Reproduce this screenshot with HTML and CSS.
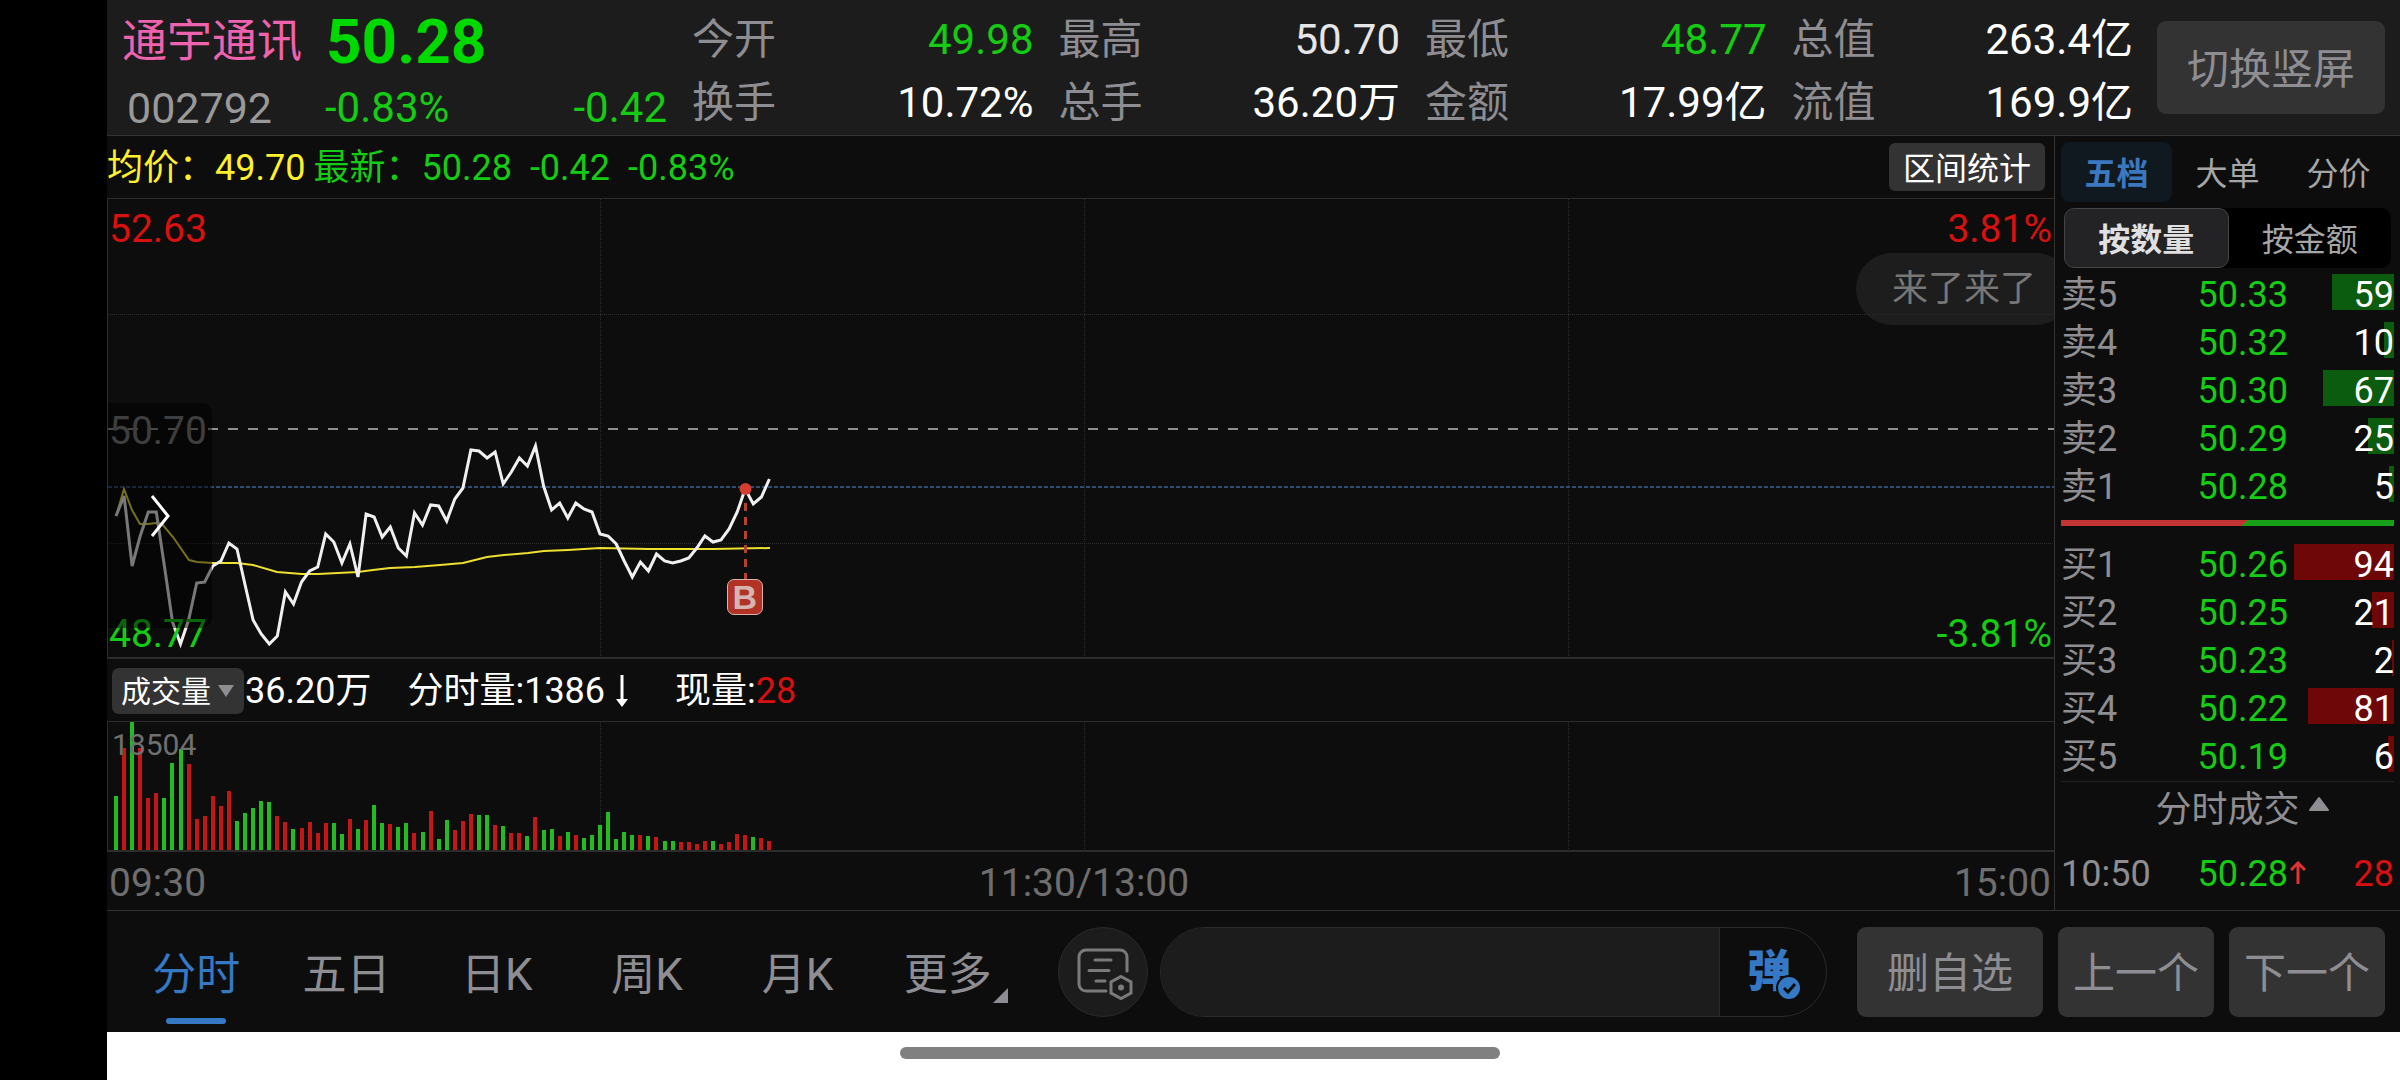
FILE: index.html
```html
<!DOCTYPE html>
<html lang="zh-CN">
<head>
    <meta charset="UTF-8">
    <meta name="viewport" content="width=device-width, initial-scale=1.0">
    <title>通宇通讯 002792</title>
    <link rel="stylesheet" href="styles.css">
</head>
<body>
    <div id="app">
        <header id="top">
            <div class="quote">
                <div class="quote_row">
                    <h1 class="stock_name">通宇通讯</h1>
                    <strong class="stock_price">50.28</strong>
                </div>
                <div class="quote_row">
                    <span class="stock_code">002792</span>
                    <span class="green">-0.83%</span>
                    <span class="change green">-0.42</span>
                </div>
            </div>
            <dl class="stats">
                <div><dt>今开</dt><dd class="green">49.98</dd></div>
                <div><dt>最高</dt><dd class="soft">50.70</dd></div>
                <div><dt>最低</dt><dd class="green">48.77</dd></div>
                <div><dt>总值</dt><dd>263.4亿</dd></div>
                <div><dt>换手</dt><dd>10.72%</dd></div>
                <div><dt>总手</dt><dd>36.20万</dd></div>
                <div><dt>金额</dt><dd>17.99亿</dd></div>
                <div><dt>流值</dt><dd>169.9亿</dd></div>
            </dl>
            <button class="btn rotate_btn">切换竖屏</button>
        </header>

        <div id="content">
            <main id="chart">
                <div class="info_bar">
                    <span class="yellow">均价：49.70</span>
                    <span class="latest green"><span>最新：50.28</span><span>-0.42</span><span>-0.83%</span></span>
                    <button class="range_btn">区间统计</button>
                </div>

                <!-- 分时走势 -->
                <div class="plot price_plot">
                    <span class="tag red left top">52.63</span>
                    <span class="tag red right top">3.81%</span>
                    <span class="tag gray left middle">50.70</span>
                    <svg viewBox="0 0 1946 458" preserveAspectRatio="none">
                        <g class="grid">
                            <path d="M0 115.500H1946M0 344.500H1946M492.500 0V458M976.500 0V458M1460.500 0V458"/>
                        </g>
                        <path class="base_line" d="M0 230H1946"/>
                        <path class="now_line" d="M0 288H1946"/>
                        <polyline class="avg_line" points="8,317 16,290 24,311 32,325 40,325 48,324 54,325 65,338 81,361 89,363 105,364 129,364 145,366 169,373 194,375 210,375 250,373 265,371 282,369 307,368 332,366 355,364 379,358 396,356 420,354 436,352 460,351 492,349 541,350 605,350 662,349"/>
                        <polyline class="price_line" id="price_line"/>
                        <path class="trade_line" d="M637.500 304V381"/>
                        <circle class="trade_dot" cx="637.500" cy="290" r="6"/>
                    </svg>
                    <span class="tag green left bottom">48.77</span>
                    <span class="tag green right bottom">-3.81%</span>
                    <span class="trade_mark">B</span>
                    <button class="expand" aria-label="展开">
                        <svg width="20" height="44" viewBox="0 0 20 44"><path d="M2 2L18 22L2 42"/></svg>
                    </button>
                    <div class="bullet">来了来了</div>
                </div>

                <div class="volume_bar">
                    <label class="indicator">
                        <select aria-label="指标">
                            <option>成交量</option>
                        </select>
                    </label>
                    <span>36.20万</span>
                    <span class="minute">分时量:1386<svg width="34" height="36" viewBox="0 0 34 36"><path d="M17 2V27" stroke="#fff" stroke-width="3"/><path d="M11 26H23L17 34Z" fill="#fff"/></svg></span>
                    <span>现量:<b class="red">28</b></span>
                </div>

                <!-- 成交量 -->
                <div class="plot volume_plot">
                    <svg viewBox="0 0 1946 128" preserveAspectRatio="none">
                        <g class="grid">
                            <path d="M492.500 0V128M976.500 0V128M1460.500 0V128"/>
                        </g>
                        <path class="vol_up" id="vol_up"/>
                        <path class="vol_down" id="vol_down"/>
                    </svg>
                    <span class="vol_max">18504</span>
                </div>

                <div class="time_axis">
                    <span>09:30</span>
                    <span>11:30/13:00</span>
                    <span>15:00</span>
                </div>
            </main>

            <aside id="book">
                <nav class="book_tabs">
                    <button class="active">五档</button>
                    <button>大单</button>
                    <button>分价</button>
                </nav>
                <div class="segment">
                    <button class="active">按数量</button>
                    <button>按金额</button>
                </div>
                <table class="sell">
                    <tr><th>卖5</th><td>50.33</td><td><i style="width:62%"></i><span>59</span></td></tr>
                    <tr><th>卖4</th><td>50.32</td><td><i style="width:10%"></i><span>10</span></td></tr>
                    <tr><th>卖3</th><td>50.30</td><td><i style="width:71%"></i><span>67</span></td></tr>
                    <tr><th>卖2</th><td>50.29</td><td><i style="width:26%"></i><span>25</span></td></tr>
                    <tr><th>卖1</th><td>50.28</td><td><i style="width:5%"></i><span>5</span></td></tr>
                </table>
                <div class="ratio"></div>
                <table class="buy">
                    <tr><th>买1</th><td>50.26</td><td><i style="width:100%"></i><span>94</span></td></tr>
                    <tr><th>买2</th><td>50.25</td><td><i style="width:22%"></i><span>21</span></td></tr>
                    <tr><th>买3</th><td>50.23</td><td><i style="width:2%"></i><span>2</span></td></tr>
                    <tr><th>买4</th><td>50.22</td><td><i style="width:86%"></i><span>81</span></td></tr>
                    <tr><th>买5</th><td>50.19</td><td><i style="width:6%"></i><span>6</span></td></tr>
                </table>
                <button class="deals_btn">分时成交
                    <svg width="22" height="16" viewBox="0 0 22 16"><path d="M11 2L20 14H2Z" fill="#8e8d92" stroke="#8e8d92" stroke-width="2" stroke-linejoin="round"/></svg>
                </button>
                <table class="deals">
                    <tr>
                        <th>10:50</th>
                        <td>50.28</td>
                        <td class="red"><svg class="up_arrow" width="16" height="24" viewBox="0 0 16 24"><path d="M8 23V3M1 9L8 2L15 9"/></svg>28</td>
                    </tr>
                </table>
            </aside>
        </div>

        <footer id="bottom">
            <nav class="period">
                <button class="active">分时</button>
                <button>五日</button>
                <button>日K</button>
                <button>周K</button>
                <button>月K</button>
                <button class="more">更多</button>
            </nav>
            <button class="circle_btn" aria-label="弹幕设置">
                <svg width="60" height="60" viewBox="0 0 60 60">
                    <path d="M54 29V15a7 7 0 0 0-7-7H13a7 7 0 0 0-7 7v27a7 7 0 0 0 7 7H33M22 18H38M16 28.500H36M23 39H32"/>
                    <path d="M48 34.500L58 40V51L48 56.500L38 51V40Z"/>
                    <circle cx="48" cy="45.500" r="3"/>
                </svg>
            </button>
            <div class="say">
                <input type="text" aria-label="发弹幕">
                <button class="danmu" aria-label="弹幕开关"><span>弹</span><svg width="26" height="26" viewBox="0 0 26 26"><circle cx="13" cy="13" r="12" fill="#3578c4" stroke="#0d0d0d" stroke-width="2"/><path d="M8 13L12 17L19 9" fill="none" stroke="#0d0d0d" stroke-width="3"/></svg></button>
            </div>
            <div class="actions">
                <button class="btn wide">删自选</button>
                <button class="btn">上一个</button>
                <button class="btn">下一个</button>
            </div>
        </footer>
        <div id="home_bar"></div>
    </div>
    <script src="script.js"></script>
</body>
</html>
```

FILE: styles.css
```css
* {
    margin: 0;
    padding: 0;
    box-sizing: border-box;
}

body {
    background-color: #000;
    color: #fff;
    font-family: Roboto, "Noto Sans CJK SC", sans-serif;
    font-size: 36px;
    line-height: 48px;
}

button, input, select {
    font: inherit;
    color: inherit;
    border: none;
    background: none;
    white-space: nowrap;
}

#app {
    display: flex;
    flex-direction: column;
    min-height: 100vh;
    padding-left: 107px; /* 刘海安全区 */
}

.green { color: #14cc14; }
.red { color: #d81010; }
.yellow { color: #fff02c; }
.gray { color: #7d7d7d; }

.btn {
    padding-top: 4px;
    background-color: #333;
    border-radius: 9px;
    color: #8e8d92;
    font-size: 42px;
}

/* 顶部行情 */
#top {
    display: flex;
    height: 136px;
    padding-right: 15px;
    background-color: #1c1c1c;
    border-bottom: 1px solid #333;
    font-size: 42px;
}

.quote {
    width: 585px;
    padding: 9px 25px 0 15px;
}

.quote_row {
    display: flex;
    align-items: center;
    height: 66px;
}

.stock_name {
    width: 204px;
    font-size: 45px;
    font-weight: normal;
    color: #ee62ae;
}

.stock_price {
    font-size: 62px;
    font-weight: 700;
    color: #00d900;
}

.stock_code {
    width: 203px;
    padding-left: 5px;
    color: #999;
    font-size: 43px;
}

.change {
    margin-left: auto;
}

.stats {
    flex: 1;
    display: grid;
    grid-template-columns: repeat(4, 1fr);
    grid-auto-rows: 63px;
    column-gap: 25px;
    padding-top: 8px;
}

.stats div {
    display: flex;
    justify-content: space-between;
    align-items: center;
}

.stats dt {
    color: #8e8d92;
}

.stats .soft {
    color: #e6e6e6;
}

.rotate_btn {
    width: 228px;
    height: 93px;
    margin: 21px 0 0 24px;
}

#content {
    display: flex;
    background-color: #0d0d0d;
    border-bottom: 1px solid #333;
}

#chart {
    flex: 1;
    min-width: 0;
}

.info_bar {
    display: flex;
    align-items: center;
    gap: 8px;
    height: 62px;
    padding: 2px 9px 0 0;
}

.latest {
    display: flex;
    gap: 18px;
}

.range_btn {
    margin: 0 0 2px auto;
    padding-top: 2px;
    width: 156px;
    height: 48px;
    background-color: #333;
    border-radius: 6px;
    font-size: 32px;
}

/* 图表 */
.plot {
    position: relative;
    overflow: hidden;
    border-left: 1px solid #2c2c2c;
}

.plot > svg {
    display: block;
    width: 100%;
    height: 100%;
}

.price_plot {
    height: 461px;
    border-top: 1px solid #2c2c2c;
    border-bottom: 2px solid #2c2c2c;
}

.volume_plot {
    height: 131px;
    border-top: 1px solid #2c2c2c;
    border-bottom: 2px solid #2c2c2c;
}

.plot path, .plot polyline {
    fill: none;
}

.grid {
    stroke: #2e2e2e;
    stroke-dasharray: 1 1;
}

.base_line {
    stroke: #8f8f8f;
    stroke-width: 2;
    stroke-dasharray: 10 10;
}

.now_line {
    stroke: #2f4d70;
    stroke-width: 2;
    stroke-dasharray: 4 2;
}

.plot .avg_line {
    stroke: #eee030;
    stroke-width: 2;
}

.plot .price_line {
    stroke: #f0f0f0;
    stroke-width: 3;
}

.trade_line {
    stroke: #b5402f;
    stroke-width: 3;
    stroke-dasharray: 8 6;
}

.trade_dot {
    fill: #d63c30;
}

.vol_up {
    stroke: #c41616;
    stroke-width: 4;
}

.vol_down {
    stroke: #22bc22;
    stroke-width: 4;
}

.tag {
    position: absolute;
    font-size: 39px;
}

.left { left: 1px; }
.right { right: 2px; }
.top { top: 6px; }
.middle { top: 208px; }
.bottom { bottom: -1px; }

.vol_max {
    position: absolute;
    left: 4px;
    top: -1px;
    font-size: 30px;
    color: #707070;
}

.trade_mark {
    position: absolute;
    left: 31.8%;
    top: 380px;
    width: 36px;
    height: 36px;
    border: 1px solid #d9b0aa;
    border-radius: 7px;
    background-color: #b23325;
    color: #d5b4b2;
    font: bold 34px/34px "Liberation Sans", sans-serif;
    text-align: center;
}

.expand {
    position: absolute;
    left: 0;
    top: 204px;
    width: 104px;
    height: 225px;
    border-radius: 0 10px 10px 0;
    background-color: rgba(0, 0, 0, 0.5);
}

.expand svg {
    display: block;
    margin: 0 auto;
}

.expand path {
    stroke: #fff;
    stroke-width: 3;
}

.bullet {
    position: absolute;
    right: -18px;
    top: 54px;
    padding: 12px 36px;
    border-radius: 36px;
    background-color: rgba(40, 40, 40, 0.6);
    color: #777;
}

.volume_bar {
    display: flex;
    align-items: center;
    gap: 36px;
    height: 62px;
    padding: 2px 0 0 5px;
}

.volume_bar b {
    font-weight: normal;
}

.indicator {
    position: relative;
    margin-right: -35px;
}

.indicator select {
    display: block;
    appearance: none;
    width: 132px;
    height: 46px;
    padding-left: 9px;
    border-radius: 7px;
    background-color: #333;
    font-size: 30px;
}

.indicator::after {
    content: "";
    position: absolute;
    right: 10px;
    top: 17px;
    border: 8px solid transparent;
    border-top: 12px solid #8e8d92;
    border-bottom: none;
}

.minute {
    display: flex;
    align-items: center;
}

.time_axis {
    display: flex;
    justify-content: space-between;
    height: 58px;
    padding: 7px 3px 0 2px;
    color: #6e6e6e;
    font-size: 39px;
}

.time_axis span:nth-child(2) {
    margin-left: 8px;
}

/* 五档盘口 */
#book {
    width: 346px;
    padding: 6px 6px 0;
    border-left: 1px solid #333;
}

.book_tabs, .segment {
    display: flex;
    font-size: 32px;
    color: #a6a6a6;
}

.book_tabs button {
    flex: 1;
    height: 60px;
    padding-top: 3px;
    border-radius: 9px;
}

.book_tabs .active {
    background-color: #101820;
    color: #3b78bf;
    font-weight: bold;
}

.segment {
    margin: 6px 3px 3px;
    border-radius: 10px;
    background-color: #000;
}

.segment button {
    flex: 1;
    height: 60px;
    padding-top: 3px;
    border-radius: 10px;
}

.segment .active {
    background-color: #232326;
    border: 1px solid #444;
    color: #e0e0e0;
    font-weight: bold;
}

#book table {
    width: 100%;
    border-collapse: collapse;
    table-layout: fixed;
}

#book th {
    width: 110px;
    height: 48px;
    color: #8e8d92;
    font-weight: normal;
    text-align: left;
}

#book td {
    padding-right: 6px;
    color: #14cc14;
    text-align: right;
}

#book td:last-child {
    position: relative;
    width: 100px;
    padding-right: 0;
    color: #fff;
}

#book td.red {
    color: #d81010;
}

td i {
    position: absolute;
    right: 0;
    top: 3px;
    height: 36px;
}

td span {
    position: relative;
}

.sell i { background-color: #0b5c0e; }
.buy i { background-color: #6e0808; }

.ratio {
    height: 6px;
    margin: 9px 0 15px;
    background: linear-gradient(135deg, #c23535 55%, #18a018 55%);
}

.deals_btn {
    display: flex;
    justify-content: center;
    gap: 8px;
    width: 100%;
    padding: 4px 0 16px 30px;
    border-top: 1px solid #222;
    color: #8e8d92;
}

.deals_btn svg {
    margin-top: 10px;
}

.up_arrow {
    position: absolute;
    left: -4px;
    top: 11px;
    fill: none;
    stroke: #e03434;
    stroke-width: 3;
}

/* 底部工具栏 */
#bottom {
    display: flex;
    align-items: center;
    height: 121px;
    padding: 1px 15px 0 14px;
    background-color: #0d0d0d;
}

.period {
    display: flex;
    width: 902px;
    color: #8e8d92;
    font-size: 44px;
}

.period button {
    position: relative;
    flex: 1;
    height: 100px;
    padding-top: 6px;
}

.period .active {
    color: #3578c4;
}

.period .active::after {
    content: "";
    position: absolute;
    left: 50%;
    bottom: -2px;
    width: 60px;
    height: 6px;
    margin-left: -30px;
    border-radius: 3px;
    background-color: #3578c4;
}

.more::after {
    content: "";
    position: absolute;
    right: 15px;
    bottom: 19px;
    border-left: 15px solid transparent;
    border-bottom: 15px solid #8e8d92;
}

.circle_btn {
    display: flex;
    align-items: center;
    justify-content: center;
    width: 90px;
    height: 90px;
    margin: 0 12px 0 35px;
    border: 1px solid #2a2a2a;
    border-radius: 50%;
    background-color: #1c1c1c;
}

.circle_btn path {
    fill: none;
    stroke: #7a7a7a;
    stroke-width: 3;
    stroke-linecap: round;
}

.circle_btn circle {
    fill: #7a7a7a;
}

.say {
    flex: 1;
    display: flex;
    height: 90px;
    overflow: hidden;
    border: 1px solid #2a2a2a;
    border-radius: 45px;
}

.say input {
    flex: 1;
    min-width: 0;
    padding: 0 30px;
    background-color: #1c1c1c;
    border-right: 1px solid #2a2a2a;
}

.danmu {
    position: relative;
    width: 106px;
    padding-right: 8px;
    color: #3578c4;
    font-size: 44px;
    font-weight: 900;
}

.danmu svg {
    position: absolute;
    right: 24px;
    bottom: 15px;
}

.actions {
    display: flex;
    gap: 15px;
    margin-left: 30px;
}

.actions .btn {
    width: 156px;
    height: 90px;
}

.actions .wide {
    width: 186px;
}

#home_bar {
    flex: 1;
    min-height: 48px;
    padding: 15px 107px 0 0;
    background-color: #fff;
}

#home_bar::after {
    content: "";
    display: block;
    width: 600px;
    height: 12px;
    margin: 0 auto;
    border-radius: 6px;
    background-color: #808080;
}
```

FILE: script.js
```js
// 每分钟价格在图中的高度
var prices = [
    317, 297, 367, 337, 313, 313, 367, 423, 445, 421, 384, 383, 367, 362, 344, 350, 386, 421, 435, 445,
    437, 393, 405, 383, 372, 368, 335, 343, 364, 345, 378, 315, 318, 338, 328, 349, 357, 314, 326, 306,
    307, 322, 300, 289, 251, 252, 259, 253, 285, 273, 259, 267, 247, 287, 311, 304, 319, 304, 310, 313,
    335, 337, 345, 362, 378, 363, 372, 355, 362, 364, 362, 359, 349, 337, 343, 341, 330, 313, 290, 305,
    298, 280
];

// 每分钟成交量，负数为下跌
var volumes = [
    -54, 102, -128, 102, 52, 57, -52, -87, -101, 86, 31, 34, 54, 44, 59, -29, -37, -42, -49, -48,
    34, 28, -21, 22, 28, 17, 27, -27, -16, 31, -21, 30, -45, -27, 26, -23, -27, 17, -18, 39,
    -11, -30, 20, 29, 36, -35, -35, 25, -24, 17, 17, -14, 33, -20, -21, 14, -18, 15, -12, -15,
    -25, -38, -11, -18, -15, 15, -14, 13, -9, -9, 8, 8, 6, 9, -9, 6, 8, 16, 15, -13,
    12, 9
];

var first = 8;
var step = 8.067;

document.getElementById("price_line").setAttribute("points", prices.map(function(y, i) {
    return (first + i * step).toFixed(1) + "," + y;
}).join(" "));

var up = "";
var down = "";
volumes.forEach(function(v, i) {
    var bar = "M" + Math.round(first + i * step) + " 128v-" + Math.abs(v);
    if (v > 0) {
        up += bar;
    } else {
        down += bar;
    }
});
document.getElementById("vol_up").setAttribute("d", up);
document.getElementById("vol_down").setAttribute("d", down);
```
